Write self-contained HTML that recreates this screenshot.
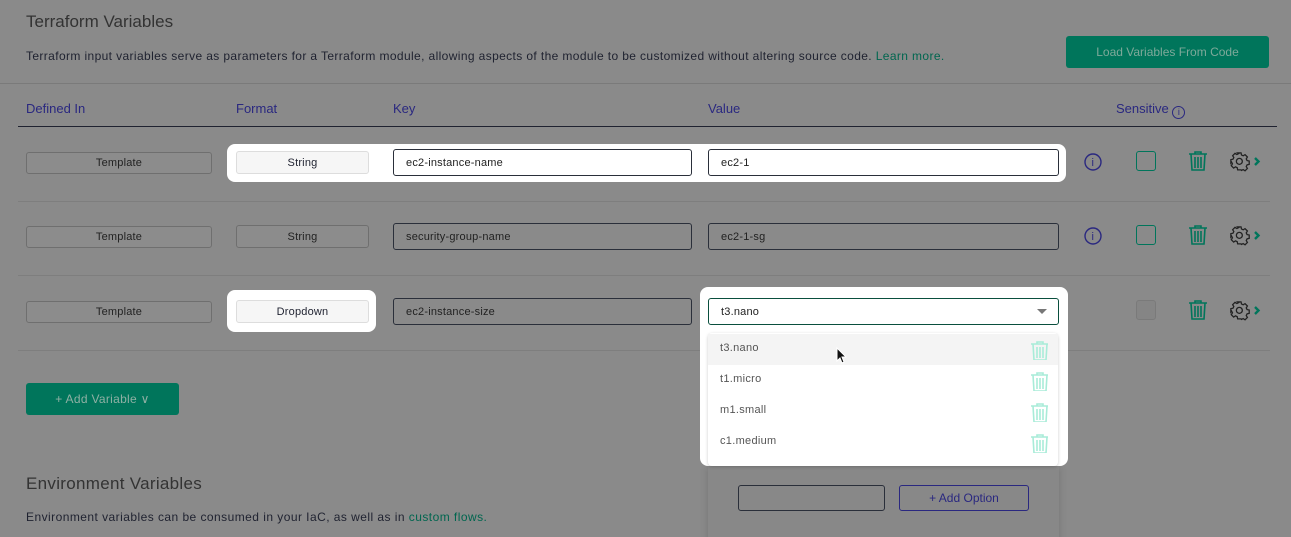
<!DOCTYPE html>
<html><head><style>
*{box-sizing:border-box;margin:0;padding:0}
html,body{width:1291px;height:537px;overflow:hidden}
body{background:#8a8a8a;font-family:"Liberation Sans",sans-serif;position:relative;color:#1f2230}
.a{position:absolute}
.t{font-size:17px;color:#333}
.hd{font-size:13px;color:#2a2880;top:101px}
.box{position:absolute;height:24px;border-radius:3px;font-size:11px;display:flex;align-items:center;letter-spacing:.2px}
.tpl{border:1px solid #6f6f6f;background:#8c8c8c;justify-content:center;color:#222}
.inp{border:1px solid #2a2f3a;padding-left:12px;color:#222}
.wh{background:#fff;position:absolute;border-radius:8px}
.sep{position:absolute;left:18px;width:1252px;height:1px;background:#7e7e7e}
.opt{position:absolute;left:720px;font-size:11px;color:#555;letter-spacing:.3px}
</style></head><body>
<div class="a t" style="left:26px;top:12px">Terraform Variables</div>
<div class="a" style="left:26px;top:49px;font-size:12px;letter-spacing:.38px;color:#1f2230">Terraform input variables serve as parameters for a Terraform module, allowing aspects of the module to be customized without altering source code. <span style="color:#00664f">Learn more.</span></div>
<div class="a" style="left:1066px;top:36px;width:203px;height:32px;background:#00755b;border-radius:3px;color:#7ea99a;font-size:12px;display:flex;align-items:center;justify-content:center">Load Variables From Code</div>
<div class="a" style="left:0;top:83px;width:1291px;height:1px;background:#7a7a7a"></div>
<div class="a hd" style="left:26px">Defined In</div>
<div class="a hd" style="left:236px">Format</div>
<div class="a hd" style="left:393px">Key</div>
<div class="a hd" style="left:708px">Value</div>
<div class="a hd" style="left:1116px">Sensitive <span style="display:inline-block;width:13px;height:13px;border:1.3px solid #2a2880;border-radius:50%;font-size:9px;text-align:center;line-height:11px;vertical-align:-2px">i</span></div>
<div class="a" style="left:18px;top:126px;width:1259px;height:1px;background:#1f2230"></div>
<div class="sep" style="top:201px"></div><div class="sep" style="top:275px"></div><div class="sep" style="top:350px"></div>

<div class="wh" style="left:227px;top:144px;width:839px;height:38px"></div>
<div class="box tpl" style="left:26px;top:152px;width:186px;height:22px">Template</div>
<div class="box" style="left:236px;top:151px;width:133px;height:23px;border:1px solid #ddd;background:#f6f6f6;justify-content:center">String</div>
<div class="box inp" style="left:393px;top:149px;width:299px;height:27px;background:#fff">ec2-instance-name</div>
<div class="box inp" style="left:708px;top:149px;width:351px;height:27px;background:#fff">ec2-1</div>
<div class="box tpl" style="left:26px;top:226px;width:186px;height:22px">Template</div>
<div class="box tpl" style="left:236px;top:225px;width:133px;height:23px">String</div>
<div class="box inp" style="left:393px;top:223px;width:299px;height:27px">security-group-name</div>
<div class="box inp" style="left:708px;top:223px;width:351px;height:27px">ec2-1-sg</div>
<div class="wh" style="left:227px;top:290px;width:149px;height:42px"></div>
<div class="box tpl" style="left:26px;top:301px;width:186px;height:22px">Template</div>
<div class="box" style="left:236px;top:300px;width:133px;height:23px;border:1px solid #ddd;background:#f6f6f6;justify-content:center">Dropdown</div>
<div class="box inp" style="left:393px;top:298px;width:299px;height:27px">ec2-instance-size</div>

<svg class="a" style="left:1082px;top:150px" width="24" height="100" viewBox="0 0 24 100">
<g fill="none" stroke="#2a2880" stroke-width="1.4"><circle cx="11" cy="12" r="8"/><circle cx="11" cy="86" r="8"/></g>
<g fill="#2a2880" font-size="11" font-family="Liberation Sans"><text x="9.5" y="16">i</text><text x="9.5" y="90">i</text></g></svg>
<div class="a" style="left:1136px;top:151px;width:20px;height:20px;border:1.3px solid #00755b;border-radius:3px"></div>
<div class="a" style="left:1136px;top:225px;width:20px;height:20px;border:1.3px solid #00755b;border-radius:3px"></div>
<div class="a" style="left:1136px;top:300px;width:20px;height:20px;border:1px solid #7a7a7a;background:#858585;border-radius:3px"></div>
<svg width="0" height="0" style="position:absolute"><defs>
<g id="tr"><path d="M1 4h18M7 4V2h6v2M3 4l1 16h12l1-16M7 7v11M10 7v11M13 7v11" fill="none" stroke-width="1.6"/></g>
<g id="gr"><g transform="translate(1,1) scale(0.85)"><path d="M9 1h4l.5 2.5 2 1 2.2-1.4 2.8 2.8-1.4 2.2 1 2 2.5.5v4l-2.5.5-1 2 1.4 2.2-2.8 2.8-2.2-1.4-2 1L13 21H9l-.5-2.5-2-1-2.2 1.4-2.8-2.8 1.4-2.2-1-2L1 13V9l2.5-.5 1-2-1.4-2.2 2.8-2.8 2.2 1.4 2-1z" fill="none" stroke="#222" stroke-width="1.5"/><circle cx="11" cy="11" r="3.5" fill="none" stroke="#222" stroke-width="1.5"/></g><path d="M26 7l3.5 3.5-3.5 3.5" fill="none" stroke="#00755b" stroke-width="2.4"/></g>
</defs></svg>
<svg class="a" style="left:1188px;top:150px" width="20" height="22" stroke="#00755b"><use href="#tr"/></svg>
<svg class="a" style="left:1188px;top:224px" width="20" height="22" stroke="#00755b"><use href="#tr"/></svg>
<svg class="a" style="left:1188px;top:299px" width="20" height="22" stroke="#00755b"><use href="#tr"/></svg>
<svg class="a" style="left:1229px;top:151px" width="36" height="22"><use href="#gr"/></svg>
<svg class="a" style="left:1229px;top:225px" width="36" height="22"><use href="#gr"/></svg>
<svg class="a" style="left:1229px;top:300px" width="36" height="22"><use href="#gr"/></svg>

<div class="a" style="left:26px;top:383px;width:153px;height:32px;background:#00755b;border-radius:3px;color:#8fb0a4;font-size:12px;display:flex;align-items:center;justify-content:center;letter-spacing:.3px">+ Add Variable &#8744;</div>
<div class="a t" style="left:26px;top:474px;letter-spacing:.3px">Environment Variables</div>
<div class="a" style="left:26px;top:510px;font-size:12px;letter-spacing:.45px">Environment variables can be consumed in your IaC, as well as in <span style="color:#00664f">custom flows.</span></div>

<div class="a" style="left:708px;top:466px;width:351px;height:80px;background:#888;box-shadow:0 0 8px rgba(0,0,0,.15)"></div>
<div class="a" style="left:738px;top:485px;width:147px;height:26px;border:1px solid #2a2f3a;border-radius:3px"></div>
<div class="a" style="left:899px;top:485px;width:130px;height:26px;border:1px solid #2a2880;border-radius:3px;color:#2a2880;font-size:12px;display:flex;align-items:center;justify-content:center">+ Add Option</div>
<div class="wh" style="left:700px;top:287px;width:368px;height:179px"></div>
<div class="box inp" style="left:708px;top:298px;width:351px;height:27px;border-color:#0a4f3e;background:#fff">t3.nano</div>
<div class="a" style="left:1037px;top:309px;border-left:5px solid transparent;border-right:5px solid transparent;border-top:5px solid #777"></div>
<div class="a" style="left:708px;top:333px;width:350px;height:133px;box-shadow:0 1px 3px rgba(0,0,0,.2);border-radius:4px;background:#fff"></div>
<div class="a" style="left:708px;top:334px;width:350px;height:31px;background:#f4f4f4"></div>
<div class="opt" style="top:342px">t3.nano</div>
<div class="opt" style="top:373px">t1.micro</div>
<div class="opt" style="top:404px">m1.small</div>
<div class="opt" style="top:435px">c1.medium</div>
<svg class="a" style="left:1030px;top:340px" width="18" height="20" stroke="#a8ecd8"><use href="#tr"/></svg>
<svg class="a" style="left:1030px;top:371px" width="18" height="20" stroke="#a8ecd8"><use href="#tr"/></svg>
<svg class="a" style="left:1030px;top:402px" width="18" height="20" stroke="#a8ecd8"><use href="#tr"/></svg>
<svg class="a" style="left:1030px;top:433px" width="18" height="20" stroke="#a8ecd8"><use href="#tr"/></svg>
<svg class="a" style="left:836px;top:347px" width="12" height="18"><path d="M1 1v13l3-3 2 5 2-1-2-5h4z" fill="#111" stroke="#fff" stroke-width="1"/></svg>
</body></html>
